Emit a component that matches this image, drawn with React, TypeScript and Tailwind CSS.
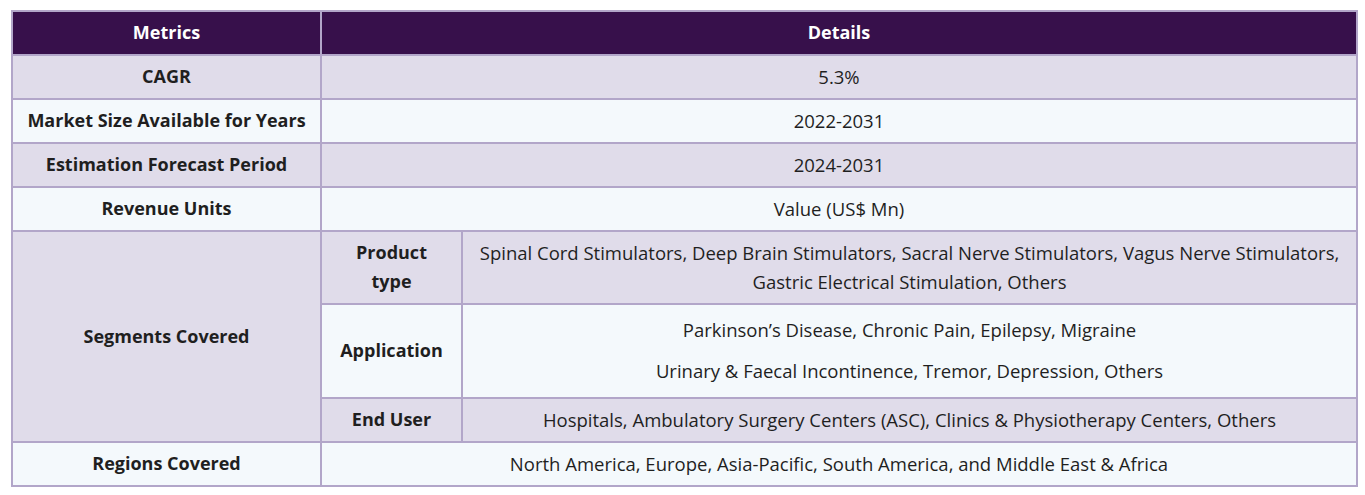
import React from 'react';

const head = 'bg-[#37104b] text-white font-bold text-[18px]';
const lav = 'bg-[#e0dcea]';
const light = 'bg-[#f4f9fc]';
const cell = 'border-2 border-[#b2a6c9] px-3 pt-[6px] pb-[7px] text-center align-middle';
const label = `${cell} font-bold text-[18px]`;

export default function App() {
  return (
    <div className="min-h-[495px] bg-white pl-[11px] pr-[7px] pt-[10px] font-['Open_Sans','Liberation_Sans',sans-serif] text-[18.5px] leading-[29px] text-[#1f1f1f]">
      <table className="w-full table-fixed border-collapse">
        <colgroup>
          <col className="w-[309px]" />
          <col className="w-[141px]" />
          <col />
        </colgroup>
        <tbody>
          <tr className={head}>
            <td className={cell}>Metrics</td>
            <td className={cell} colSpan={2}>Details</td>
          </tr>
          <tr className={lav}>
            <td className={label}>CAGR</td>
            <td className={cell} colSpan={2}>5.3%</td>
          </tr>
          <tr className={light}>
            <td className={label}>Market Size Available for Years</td>
            <td className={cell} colSpan={2}>2022-2031</td>
          </tr>
          <tr className={lav}>
            <td className={label}>Estimation Forecast Period</td>
            <td className={cell} colSpan={2}>2024-2031</td>
          </tr>
          <tr className={light}>
            <td className={label}>Revenue Units</td>
            <td className={cell} colSpan={2}>Value (US$ Mn)</td>
          </tr>
          <tr className={lav}>
            <td className={`${label} ${lav}`} rowSpan={3}>Segments Covered</td>
            <td className={label}>
              Product
              <br />
              type
            </td>
            <td className={`${cell} px-2`}>
              Spinal Cord Stimulators, Deep Brain Stimulators, Sacral Nerve Stimulators, Vagus Nerve Stimulators,
              <br />
              Gastric Electrical Stimulation, Others
            </td>
          </tr>
          <tr className={light}>
            <td className={label}>Application</td>
            <td className="border-2 border-[#b2a6c9] px-3 pt-[10px] pb-[6px] text-center align-middle">
              <p className="mb-[12px]">Parkinson’s Disease, Chronic Pain, Epilepsy, Migraine</p>
              <p className="mb-[6px]">Urinary &amp; Faecal Incontinence, Tremor, Depression, Others</p>
            </td>
          </tr>
          <tr className={lav}>
            <td className={label}>End User</td>
            <td className={cell}>
              Hospitals, Ambulatory Surgery Centers (ASC), Clinics &amp; Physiotherapy Centers, Others
            </td>
          </tr>
          <tr className={light}>
            <td className={label}>Regions Covered</td>
            <td className={cell} colSpan={2}>
              North America, Europe, Asia-Pacific, South America, and Middle East &amp; Africa
            </td>
          </tr>
        </tbody>
      </table>
    </div>
  );
}
